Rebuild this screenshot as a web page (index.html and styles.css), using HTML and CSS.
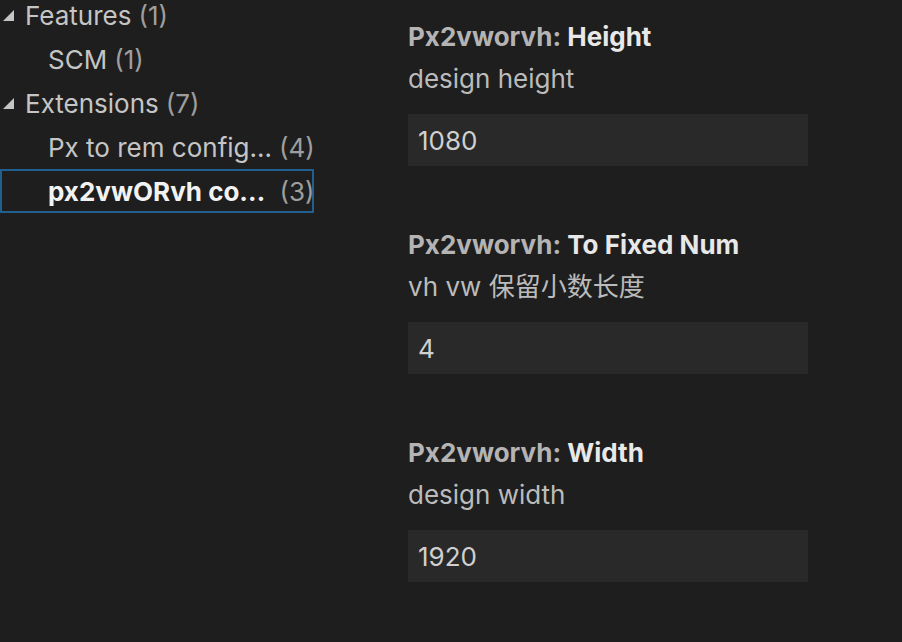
FILE: index.html
```html
<!DOCTYPE html>
<html>
<head>
<meta charset="utf-8">
<link rel="stylesheet" href="styles.css">
</head>
<body>
<div class="layout">
  <div class="tree">
    <div class="row group">
      <svg class="twisty" width="12" height="12" viewBox="0 0 12 12"><polygon points="0,11 11,11 11,0" fill="#c5c5c5"/></svg>
      <span class="name">Features</span><span class="count">(1)</span>
    </div>
    <div class="row child"><span class="name">SCM</span><span class="count">(1)</span></div>
    <div class="row group">
      <svg class="twisty" width="12" height="12" viewBox="0 0 12 12"><polygon points="0,11 11,11 11,0" fill="#c5c5c5"/></svg>
      <span class="name">Extensions</span><span class="count">(7)</span>
    </div>
    <div class="row child"><span class="name">Px to rem config…</span><span class="count">(4)</span></div>
    <div class="row child selected"><span class="name bold">px2vwORvh co…</span><span class="count wide">(3)</span></div>
  </div>
  <div class="settings">
    <div class="setting">
      <div class="title"><span class="cat">Px2vworvh: </span><span class="key">Height</span></div>
      <div class="desc">design height</div>
      <div class="input">1080</div>
    </div>
    <div class="setting">
      <div class="title"><span class="cat">Px2vworvh: </span><span class="key">To Fixed Num</span></div>
      <div class="desc">vh vw 保留小数长度</div>
      <div class="input">4</div>
    </div>
    <div class="setting">
      <div class="title"><span class="cat">Px2vworvh: </span><span class="key">Width</span></div>
      <div class="desc">design width</div>
      <div class="input">1920</div>
    </div>
  </div>
</div>
</body>
</html>
```

FILE: styles.css
```css
html, body {
  margin: 0;
  padding: 0;
  background: #1e1e1e;
  height: 100%;
  overflow: hidden;
}
body {
  font-family: Inter, "Noto Sans", "Noto Sans CJK SC", sans-serif;
  font-size: 26px;
  color: #cccccc;
}
.layout {
  display: flex;
  align-items: flex-start;
}
.tree {
  width: 314px;
  margin-top: -7px;
  flex: none;
}
.row {
  height: 44px;
  display: flex;
  align-items: center;
  box-sizing: border-box;
  white-space: nowrap;
}
.row.group {
  padding-left: 3px;
}
.twisty {
  width: 12px;
  height: 12px;
  margin-right: 10px;
  margin-top: 2px;
}
.row.child {
  padding-left: 48px;
}
.name {
  color: #c5c5c5;
}
.count {
  color: #9e9e9e;
  margin-left: 7px;
}
.count.wide {
  margin-left: 14px;
}
.name.bold {
  color: #f2f2f2;
  font-weight: 700;
}
.row.selected {
  border: 2px solid #215f8e;
  padding-left: 46px;
}
.settings {
  margin-left: 94px;
  padding-top: 19px;
  display: flex;
  flex-direction: column;
  gap: 61px;
  width: 400px;
}
.setting {
  display: flex;
  flex-direction: column;
}
.title {
  line-height: 36px;
  font-weight: 700;
  white-space: nowrap;
}
.cat {
  color: #b4b4b4;
}
.key {
  color: #e8e8e8;
}
.desc {
  line-height: 36px;
  margin-top: 6px;
  color: #bbbbbb;
}
.input {
  margin-top: 17px;
  height: 52px;
  background: #292929;
  box-sizing: border-box;
  padding-left: 10px;
  display: flex;
  align-items: center;
  color: #d0d0d0;
}
```
